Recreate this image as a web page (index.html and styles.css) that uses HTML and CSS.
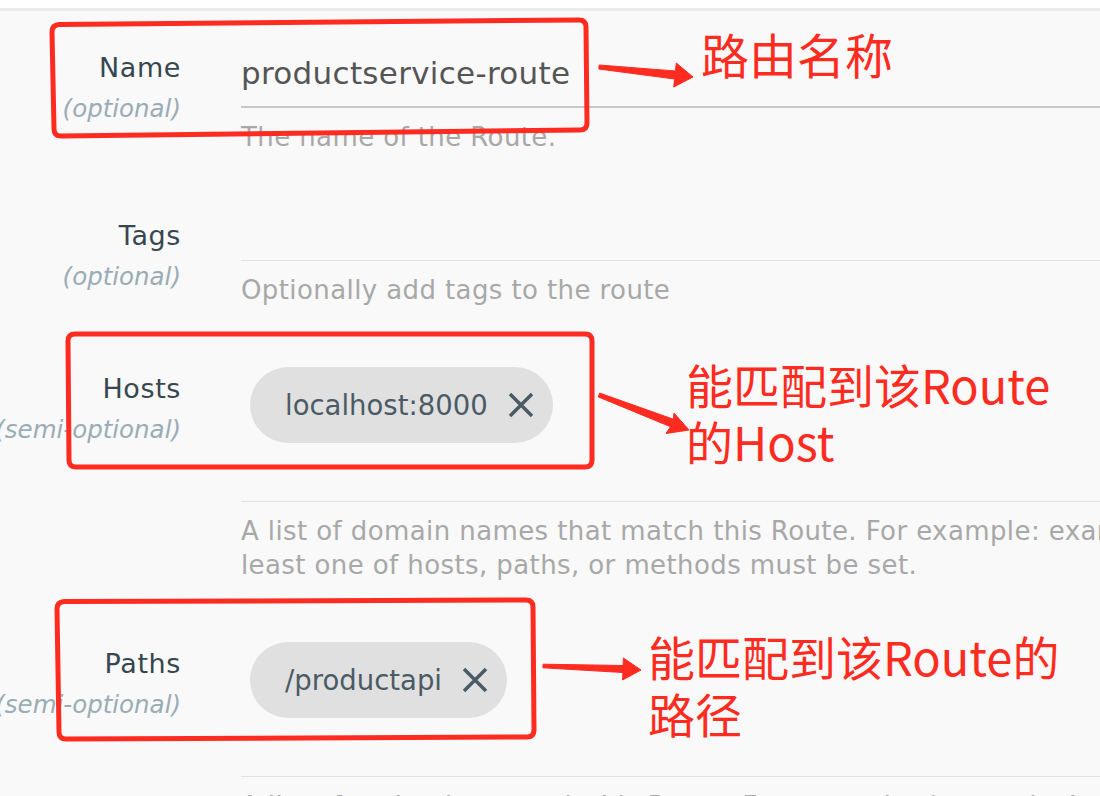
FILE: index.html
```html
<!DOCTYPE html>
<html lang="en">
<head>
    <meta charset="UTF-8">
    <meta name="viewport" content="width=device-width, initial-scale=1.0">
    <title>Route</title>
    <link rel="stylesheet" href="styles.css">
</head>
<body>
    <div class="topbar"></div>
    <form class="route-form">
        <div class="row">
            <div class="label"><span class="name">Name</span><span class="opt">(optional)</span></div>
            <div class="field">
                <div class="input input-filled"><span class="value">productservice-route</span></div>
                <p class="help">The name of the Route.</p>
            </div>
        </div>
        <div class="row">
            <div class="label"><span class="name">Tags</span><span class="opt">(optional)</span></div>
            <div class="field">
                <div class="input"><div class="entry"></div></div>
                <p class="help">Optionally add tags to the route</p>
            </div>
        </div>
        <div class="row">
            <div class="label"><span class="name">Hosts</span><span class="opt">(semi-optional)</span></div>
            <div class="field">
                <div class="input">
                    <div class="chips">
                        <span class="chip">localhost:8000
                            <svg viewBox="0 0 26 26"><path d="M2 2L24 24M24 2L2 24"/></svg>
                        </span>
                    </div>
                    <div class="entry"></div>
                </div>
                <p class="help">A list of domain names that match this Route. For example: example.com. At least one of hosts, paths, or methods must be set.</p>
            </div>
        </div>
        <div class="row">
            <div class="label"><span class="name">Paths</span><span class="opt">(semi-optional)</span></div>
            <div class="field">
                <div class="input">
                    <div class="chips">
                        <span class="chip">/productapi
                            <svg viewBox="0 0 26 26"><path d="M2 2L24 24M24 2L2 24"/></svg>
                        </span>
                    </div>
                    <div class="entry"></div>
                </div>
                <p class="help">A list of paths that match this Route. For example: /my-path. At least one of hosts, paths, or methods must be set.</p>
            </div>
        </div>
    </form>

    <!-- annotations drawn over the form -->
    <svg class="marks" viewBox="0 0 1100 796">
        <path class="box" d="M59,24.5 L579,20 Q586,20 586,27 L587,123 Q587,130 580,130 L61,136 Q54,136 54,129 L52,32 Q52,25 59,24.5 Z"/>
        <path class="box" d="M75,334 L585,334 Q592,334 592,341 L592,460 Q592,467 585,467 L76,467 Q69,467 69,460 L68,341 Q68,334 75,334 Z"/>
        <path class="box" d="M64,601.5 L526,600 Q533,600 533,607 L534,730 Q534,737 527,737 L66,739 Q59,739 59,732 L57,609 Q57,602 64,601.5 Z"/>
        <polygon class="arrow" points="599.2,65 675.4,71 676.3,63 693,77 673.7,87 674.6,79 598.8,69"/>
        <polygon class="arrow" points="599.7,393.1 673.5,419.3 674,413 689,430 666,433.5 670.5,426.7 598.3,396.9"/>
        <polygon class="arrow" points="543.1,664.2 623.1,665.5 623.4,658 641,670 622.6,680 622.9,672.5 542.9,667.8"/>
    </svg>
    <div class="note note-name">路由名称</div>
    <div class="note note-hosts">能匹配到该Route<br>的Host</div>
    <div class="note note-paths">能匹配到该Route的<br>路径</div>
</body>
</html>
```

FILE: styles.css
```css
body{
    position: relative;
    width: 1100px;
    height: 796px;
    margin: 0;
    overflow: hidden;
    background-color: #f9f9f9;
    font-family: "DejaVu Sans", sans-serif;
}
.topbar{
    height: 8px;
    background-color: #fff;
    border-bottom: 3px solid #ececec;
}
.route-form{
    width: 1300px;
    padding-top: 32.5px;
}
.row{
    display: flex;
    gap: 60px;
    margin-bottom: 58px;
}
.label{
    display: flex;
    flex-direction: column;
    align-items: flex-end;
    flex-shrink: 0;
    width: 181px;
    padding-top: 3px;
    line-height: 41px;
    white-space: nowrap;
}
.label .name{
    font-size: 27px;
    letter-spacing: 0.6px;
    color: #36474f;
}
.label .opt{
    font-size: 24.5px;
    font-style: italic;
    color: #9aacb6;
}
.field{
    flex: 1;
    min-width: 0;
}
.input{
    padding: 2px 0 6px;
    border-bottom: 1px solid #e0e0e0;
}
.input-filled{
    border-bottom: 2px solid #c8c8c8;
}
.value{
    display: block;
    font-size: 31px;
    line-height: 54px;
    letter-spacing: 0.3px;
    color: #555;
}
.entry{
    height: 40px;
}
.chips{
    display: flex;
    gap: 10px;
    margin-bottom: 12px;
    padding-left: 9px;
}
.chip{
    display: flex;
    align-items: center;
    gap: 20px;
    height: 76px;
    padding: 0 19px 0 35px;
    border-radius: 38px;
    background-color: #e0e0e0;
    color: #4b5b65;
    font-size: 27.5px;
}
.chip svg{
    width: 26px;
    height: 26px;
}
.chip path{
    fill: none;
    stroke: #4b5b65;
    stroke-width: 3.5;
}
.help{
    margin: 12px 0 0;
    font-size: 26px;
    line-height: 34px;
    letter-spacing: 0.4px;
    color: #a8a8a8;
}
.marks{
    position: absolute;
    top: 0;
    left: 0;
    width: 1100px;
    height: 796px;
    pointer-events: none;
}
.marks .box{
    fill: none;
    stroke: #fe2b20;
    stroke-width: 5;
    stroke-linejoin: round;
}
.marks .arrow{
    fill: #fe2b20;
    stroke: #fe2b20;
    stroke-width: 1;
    stroke-linejoin: round;
}
.note{
    position: absolute;
    color: #fe2b20;
    font-family: "Noto Sans CJK SC", sans-serif;
    font-size: 47px;
    line-height: 57px;
    white-space: nowrap;
}
.note-name{
    left: 701px;
    top: 25px;
    font-size: 48px;
}
.note-hosts{
    left: 686px;
    top: 355px;
}
.note-paths{
    left: 648px;
    top: 627px;
}
```
